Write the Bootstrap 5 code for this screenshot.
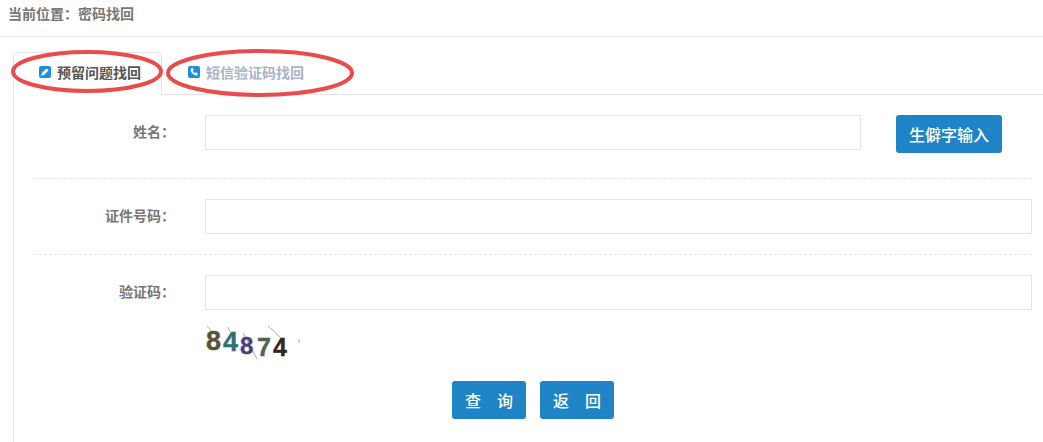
<!DOCTYPE html>
<html lang="zh-CN">
<head>
<meta charset="utf-8">
<title>密码找回</title>
<link href="https://cdn.jsdelivr.net/npm/bootstrap@5.3.0/dist/css/bootstrap.min.css" rel="stylesheet">
<style>
html,body{height:442px;overflow:hidden;background:#fff;}
body{font-family:"Noto Sans CJK SC","Liberation Sans",sans-serif;font-size:14px;color:#666;}
.crumb-bar{height:37px;padding:3px 8px 0;border-bottom:1px solid #e7e7eb;font-weight:700;font-size:14px;line-height:20px;color:#777;}
.stage{position:relative;padding:15px 11px 0 13px;}
.tab-strip{display:flex;height:43px;border-bottom:1px solid #e5e5e5;margin-right:-11px;}
.tab-item{display:flex;align-items:center;gap:6px;font-weight:700;font-size:14px;line-height:20px;height:43px;padding-bottom:4px;}
.tab-on{width:149px;padding-left:25px;color:#555;background:#fff;border:1px solid #e5e5e5;border-bottom-color:#fff;border-radius:4px 4px 0 0;}
.tab-off{padding-left:26px;color:#a9b3c9;}
.tab-ico{width:12px;height:12px;flex:none;display:block;}
.form-area{border-left:1px solid #e5e5e5;padding:20px 0 0 20px;height:347px;}
.form-line{display:flex;align-items:flex-start;}
.form-line label{width:141px;line-height:33px;text-align:right;font-weight:700;color:#777;flex:none;}
.form-line .form-control{height:35px;border:1px solid #e5e5e5;border-radius:0;margin-left:30px;padding:4px 8px;}
.name-input{width:656px;flex:none;}
.btn-blue{background:#1e84c6;border:0;color:#fff;border-radius:3px;font-weight:500;font-size:16px;line-height:24px;padding:0;height:38px;}
.btn-blue:hover{background:#1e84c6;color:#fff;}
.wide-btn{width:106px;margin-left:35px;}
.rule-dash{border-top:1px dashed #e5e5e5;}
.rule-a{margin:25px 0 20px;}
.rule-b{margin:20px 0 20px;}
.captcha-box{display:block;margin:15px 0 0 171px;width:96px;height:36px;}
.captcha-box text{font-family:"Liberation Sans",sans-serif;font-weight:700;stroke-width:.4;}
.act-btns{display:flex;justify-content:center;gap:14px;margin:20px 0 0 0;width:998px;}
.act-btns .btn-blue{width:74px;white-space:pre;}
.ring-layer{position:absolute;left:0;top:0;width:370px;height:70px;pointer-events:none;}
</style>
</head>
<body>
<div class="crumb-bar">当前位置：密码找回</div>
<div class="stage">
  <div class="tab-strip">
    <div class="tab-item tab-on">
      <svg class="tab-ico" viewBox="0 0 12 12"><rect width="12" height="12" rx="2" fill="#1a8fe3"/><path d="M2.300 9.700l.6-2.700 4-4a1 1 0 0 1 1.400 0l.7.7a1 1 0 0 1 0 1.400l-4 4z" fill="#fff"/></svg>
      <span>预留问题找回</span>
    </div>
    <div class="tab-item tab-off">
      <svg class="tab-ico" viewBox="0 0 12 12"><rect width="12" height="12" rx="2" fill="#1a8fe3"/><path d="M3.200 2.200l1.500-.3 1 2.200-.9.900c.3.900 1 1.700 1.900 2.100l.9-.9 2.100 1-.3 1.500c-.2.600-.8.900-1.400.7C5.200 8.900 3 6.700 2.500 3.700c-.1-.6.200-1.200.7-1.500z" fill="#fff"/></svg>
      <span>短信验证码找回</span>
    </div>
  </div>
  <div class="form-area">
    <div class="form-line">
      <label for="f1">姓名：</label>
      <input id="f1" class="form-control name-input" type="text">
      <button class="btn btn-blue wide-btn" type="button">生僻字输入</button>
    </div>
    <div class="rule-dash rule-a"></div>
    <div class="form-line">
      <label for="f2">证件号码：</label>
      <input id="f2" class="form-control" type="text">
    </div>
    <div class="rule-dash rule-b"></div>
    <div class="form-line">
      <label for="f3">验证码：</label>
      <input id="f3" class="form-control" type="text">
    </div>
    <svg class="captcha-box" viewBox="0 0 96 36">
      <g stroke="#888" stroke-width=".7" fill="none"><path d="M2 1l7 8M23 2l2 5M38 8l14 26M63 1l13 12M94 14v4"/></g>
      <text x="1" y="25" fill="#5d5233" stroke="#5d5233" font-size="27">8</text>
      <text x="18" y="26" fill="#2f7072" stroke="#2f7072" font-size="27">4</text>
      <text x="35" y="29" fill="#4c3f7d" stroke="#4c3f7d" font-size="24">8</text>
      <text x="52" y="31" fill="#4f6552" stroke="#4f6552" font-size="25">7</text>
      <text x="68" y="31" fill="#33291f" stroke="#33291f" font-size="25">4</text>
    </svg>
    <div class="act-btns">
      <button class="btn btn-blue" type="button">查　询</button>
      <button class="btn btn-blue" type="button">返　回</button>
    </div>
  </div>
  <svg class="ring-layer" viewBox="0 0 370 70">
    <ellipse cx="87" cy="34.500" rx="74" ry="19.500" fill="none" stroke="#e94c4c" stroke-width="4"/>
    <ellipse cx="260" cy="36" rx="92" ry="22" fill="none" stroke="#e94c4c" stroke-width="4"/>
  </svg>
</div>
<script src="https://cdn.jsdelivr.net/npm/bootstrap@5.3.0/dist/js/bootstrap.bundle.min.js"></script>
</body>
</html>
